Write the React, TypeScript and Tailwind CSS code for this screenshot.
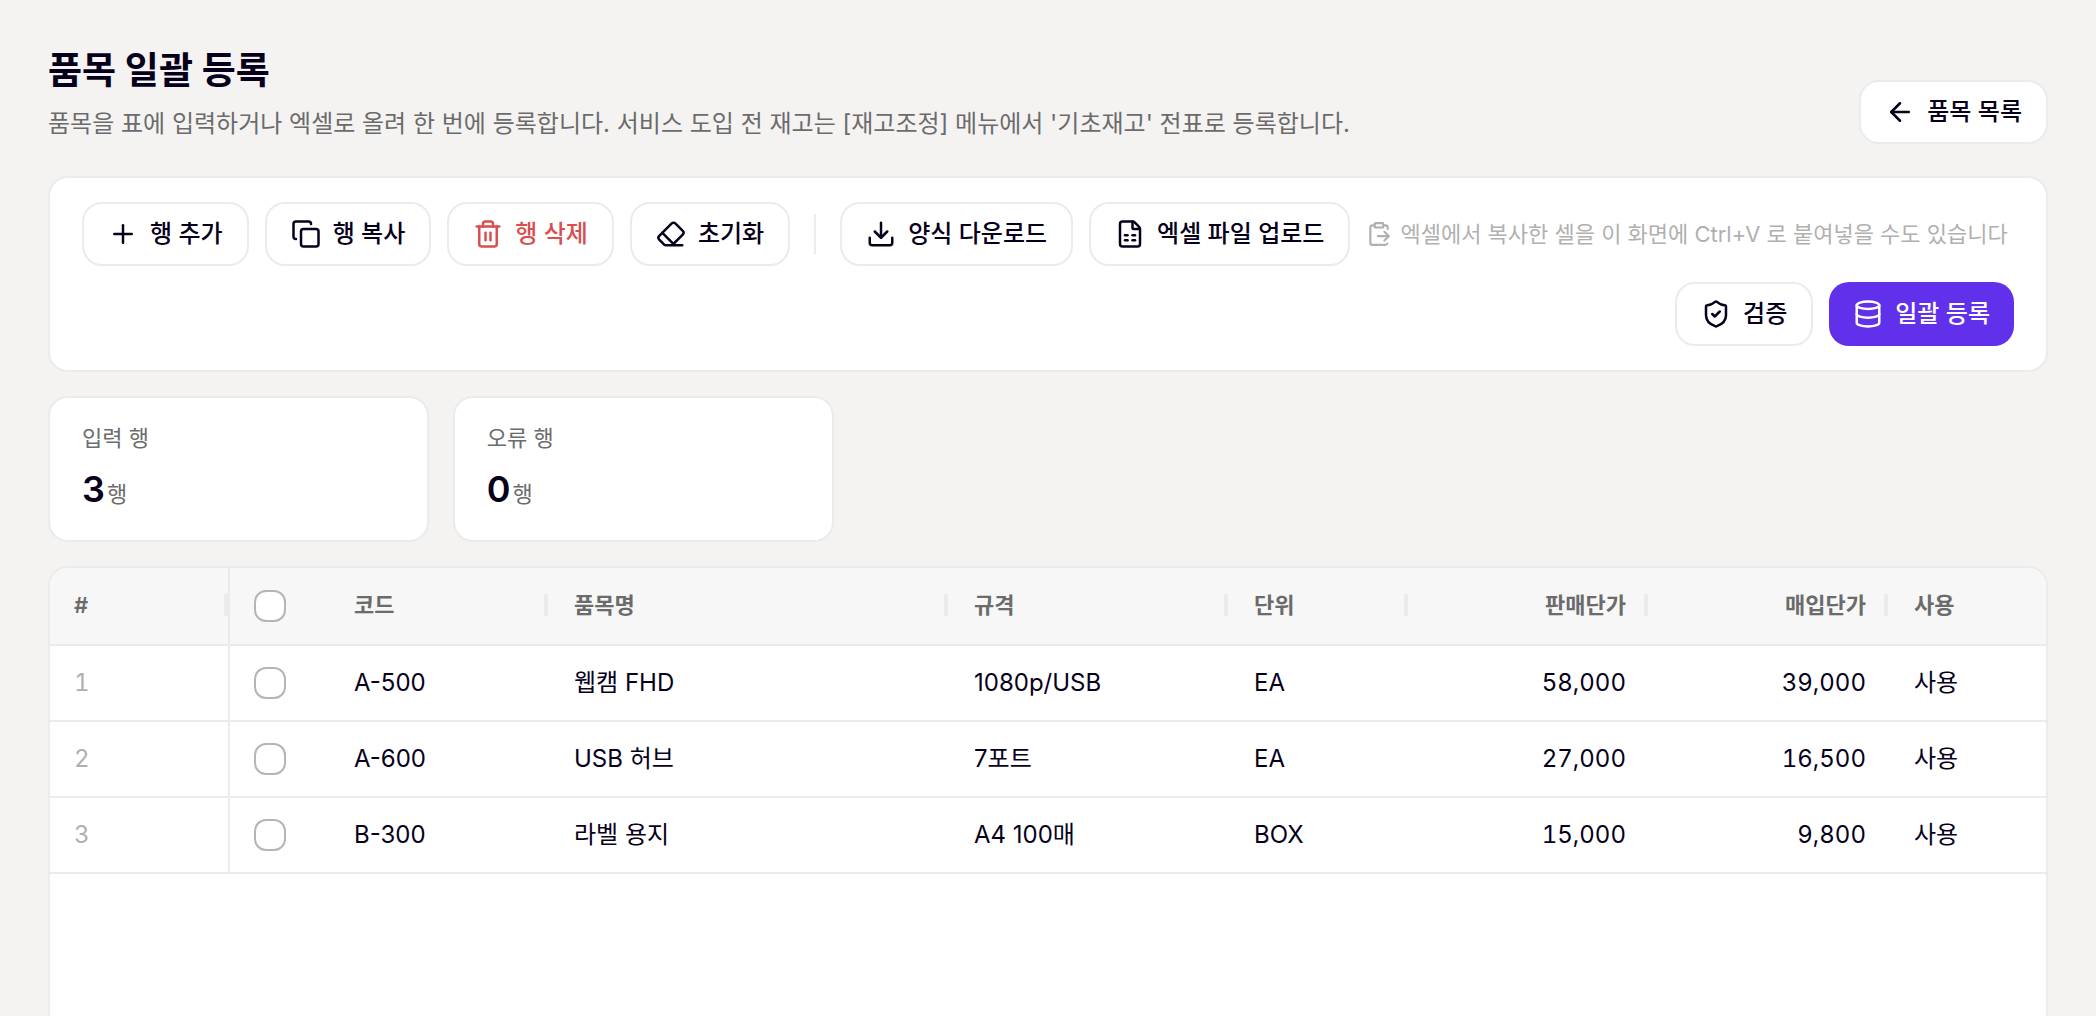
import type { ReactNode } from "react";
import {
  ArrowLeft,
  ClipboardPaste,
  Copy,
  Database,
  Download,
  Eraser,
  FileSpreadsheet,
  Plus,
  ShieldCheck,
  Trash2,
} from "lucide-react";
import type { LucideIcon } from "lucide-react";
import { twMerge } from "tailwind-merge";

interface ItemRow {
  code: string;
  name: string;
  spec: string;
  unit: string;
  salePrice: number;
  purchasePrice: number;
  active: boolean;
}

const rows: ItemRow[] = [
  { code: "A-500", name: "웹캠 FHD", spec: "1080p/USB", unit: "EA", salePrice: 58000, purchasePrice: 39000, active: true },
  { code: "A-600", name: "USB 허브", spec: "7포트", unit: "EA", salePrice: 27000, purchasePrice: 16500, active: true },
  { code: "B-300", name: "라벨 용지", spec: "A4 100매", unit: "BOX", salePrice: 15000, purchasePrice: 9800, active: true },
];

const stats = [
  { label: "입력 행", value: rows.length },
  { label: "오류 행", value: 0 },
];

const columns = [
  { label: "코드", width: "w-[220px]" },
  { label: "품목명", width: "w-[400px]" },
  { label: "규격", width: "w-[280px]" },
  { label: "단위", width: "w-[180px]" },
  { label: "판매단가", width: "w-60", right: true },
  { label: "매입단가", width: "w-60", right: true },
];

function Button({
  icon: Icon,
  className,
  children,
}: {
  icon: LucideIcon;
  className?: string;
  children: ReactNode;
}) {
  return (
    <button
      type="button"
      className={twMerge(
        "inline-flex h-16 shrink-0 items-center gap-3 rounded-[20px] border-2 border-[#ebebeb] bg-white px-6 text-2xl font-medium whitespace-nowrap",
        className,
      )}
    >
      <Icon size={30} />
      {children}
    </button>
  );
}

function Checkbox({ label }: { label: string }) {
  return (
    <input
      type="checkbox"
      aria-label={label}
      className="block size-8 appearance-none rounded-xl border-2 border-[#b5b5b5] bg-white checked:border-[#6130ea] checked:bg-[#6130ea]"
    />
  );
}

// Column resize grip on the right edge of a header cell
function Grip({ className }: { className?: string }) {
  return (
    <span
      className={twMerge("absolute top-[26px] right-0.5 h-[22px] w-1 bg-[#ebebeb]", className)}
    />
  );
}

export default function App() {
  return (
    <main className="flex h-screen flex-col overflow-hidden bg-[#f4f3f2] px-12 pt-12 font-['Inter','Noto_Sans_CJK_KR',sans-serif] text-[#06001a]">
      <header className="flex items-end justify-between gap-6">
        <div>
          <h1 className="text-[37px] leading-[46px] font-bold">품목 일괄 등록</h1>
          <p className="mt-2.5 text-2xl leading-10 text-[#6b6b6b]">
            품목을 표에 입력하거나 엑셀로 올려 한 번에 등록합니다. 서비스 도입 전 재고는 [재고조정] 메뉴에서 '기초재고' 전표로 등록합니다.
          </p>
        </div>
        <Button icon={ArrowLeft}>품목 목록</Button>
      </header>

      <section className="mt-8 flex flex-wrap items-center gap-4 rounded-[20px] border-2 border-[#ebebeb] bg-white px-8 py-6">
        <Button icon={Plus}>행 추가</Button>
        <Button icon={Copy}>행 복사</Button>
        <Button icon={Trash2} className="text-[#d94f4f]">
          행 삭제
        </Button>
        <Button icon={Eraser}>초기화</Button>
        <span className="mx-2 h-10 w-0.5 bg-[#ebebeb]" />
        <Button icon={Download}>양식 다운로드</Button>
        <Button icon={FileSpreadsheet}>엑셀 파일 업로드</Button>
        <span className="flex items-center gap-2 text-[22px] text-[#b0b0b0]">
          <ClipboardPaste size={26} />
          엑셀에서 복사한 셀을 이 화면에 Ctrl+V 로 붙여넣을 수도 있습니다
        </span>
        <div className="ml-auto flex gap-4">
          <Button icon={ShieldCheck}>검증</Button>
          <Button icon={Database} className="border-0 bg-[#6130ea] text-white">
            일괄 등록
          </Button>
        </div>
      </section>

      <section className="mt-6 grid grid-cols-5 gap-6">
        {stats.map((stat) => (
          <div key={stat.label} className="rounded-[20px] border-2 border-[#ebebeb] bg-white px-8 py-6">
            <p className="text-[22px] leading-8 text-[#6b6b6b]">{stat.label}</p>
            <p className="mt-2 flex h-[54px] items-baseline gap-0.5">
              <span className="text-4xl leading-[54px] font-semibold">{stat.value}</span>
              <span className="text-[22px] text-[#6b6b6b]">행</span>
            </p>
          </div>
        ))}
      </section>

      <section className="mt-6 flex-1 overflow-hidden rounded-t-[20px] border-2 border-b-0 border-[#ebebeb] bg-white">
        <table className="w-full table-fixed border-separate border-spacing-0 text-left text-2xl">
          <thead>
            <tr className="h-[78px] bg-[#f7f7f7] text-[22px] text-[#6b6b6b] *:border-b-2 *:border-[#ebebeb] *:px-6 *:font-semibold">
              <th className="relative w-[180px] border-r-2">
                #
                <Grip className="right-0" />
              </th>
              <th className="w-[100px]">
                <Checkbox label="전체 선택" />
              </th>
              {columns.map((col) => (
                <th
                  key={col.label}
                  className={twMerge("relative", col.width, col.right && "text-right")}
                >
                  {col.label}
                  <Grip />
                </th>
              ))}
              <th>사용</th>
            </tr>
          </thead>
          <tbody>
            {rows.map((row, i) => (
              <tr key={row.code} className="h-[76px] *:border-b-2 *:border-[#ebebeb] *:px-6">
                <td className="border-r-2 text-[#b0b0b0] tabular-nums">{i + 1}</td>
                <td>
                  <Checkbox label={`${row.code} 선택`} />
                </td>
                <td>{row.code}</td>
                <td>{row.name}</td>
                <td>{row.spec}</td>
                <td>{row.unit}</td>
                <td className="text-right tabular-nums">{row.salePrice.toLocaleString("en-US")}</td>
                <td className="text-right tabular-nums">{row.purchasePrice.toLocaleString("en-US")}</td>
                <td>{row.active ? "사용" : "미사용"}</td>
              </tr>
            ))}
          </tbody>
        </table>
      </section>
    </main>
  );
}
